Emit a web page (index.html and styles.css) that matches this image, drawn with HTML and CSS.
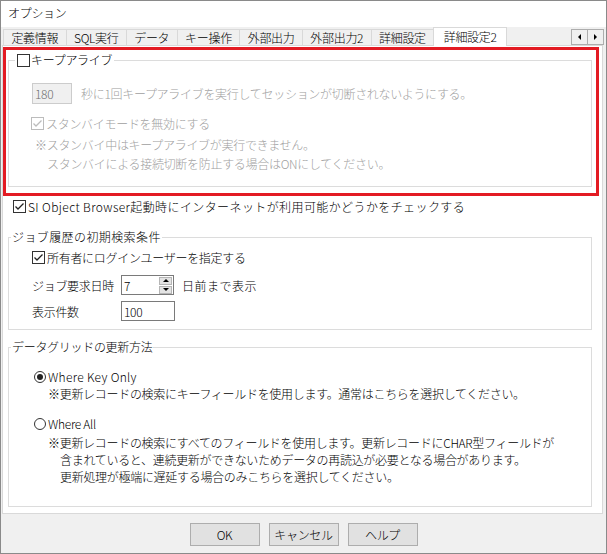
FILE: index.html
```html
<!DOCTYPE html>
<html lang="ja">
<head>
    <meta charset="UTF-8">
    <title>オプション</title>
    <link rel="stylesheet" href="styles.css">
</head>
<body>
    <div class="window">
        <div class="titlebar">オプション</div>

        <div class="tabstrip">
            <div class="tabs">
                <div class="tab">定義情報</div>
                <div class="tab">SQL実行</div>
                <div class="tab">データ</div>
                <div class="tab">キー操作</div>
                <div class="tab">外部出力</div>
                <div class="tab">外部出力2</div>
                <div class="tab">詳細設定</div>
                <div class="tab active">詳細設定2</div>
            </div>
            <div class="tab-scroll">
                <span class="scroll-btn"><span class="arrow-left"></span></span>
                <span class="scroll-btn"><span class="arrow-right"></span></span>
            </div>
        </div>

        <div class="page">
            <!-- キープアライブ (赤枠) -->
            <div class="highlight">
                <fieldset class="group keepalive">
                    <legend><span class="check"></span>キープアライブ</legend>
                    <div class="ka-interval disabled">
                        <span class="textbox textbox-disabled">180</span>
                        <span class="ka-text">秒に1回キープアライブを実行してセッションが切断されないようにする。</span>
                    </div>
                    <div class="check-row ka-standby disabled">
                        <span class="check checked check-disabled">
                            <svg width="11" height="11" viewBox="0 0 11 11"><path d="M1.5 5.5 L4 8 L9.5 2.5" fill="none" stroke="#bcbcbc" stroke-width="1.3"/></svg>
                        </span>スタンバイモードを無効にする
                    </div>
                    <div class="note ka-note1 disabled">※スタンバイ中はキープアライブが実行できません。</div>
                    <div class="note ka-note2 disabled">スタンバイによる接続切断を防止する場合はONにしてください。</div>
                </fieldset>
            </div>

            <div class="check-row top-check">
                <span class="check checked">
                    <svg width="11" height="11" viewBox="0 0 11 11"><path d="M1.5 5.5 L4 8 L9.5 2.5" fill="none" stroke="#222" stroke-width="1.3"/></svg>
                </span><span class="wide-text">SI Object Browser起動時にインターネットが利用可能かどうかをチェックする</span>
            </div>

            <!-- ジョブ履歴 -->
            <fieldset class="group job">
                <legend>ジョブ履歴の初期検索条件</legend>
                <div class="check-row job-owner">
                    <span class="check checked">
                        <svg width="11" height="11" viewBox="0 0 11 11"><path d="M1.5 5.5 L4 8 L9.5 2.5" fill="none" stroke="#222" stroke-width="1.3"/></svg>
                    </span>所有者にログインユーザーを指定する
                </div>
                <div class="field-row job-date">
                    <span class="field-label">ジョブ要求日時</span>
                    <span class="textbox spinbox">
                        <span class="spin-value">7</span>
                        <span class="spin">
                            <span class="spin-btn"><span class="arrow-up"></span></span>
                            <span class="spin-btn"><span class="arrow-down"></span></span>
                        </span>
                    </span>
                    <span class="field-after">日前まで表示</span>
                </div>
                <div class="field-row job-count">
                    <span class="field-label">表示件数</span>
                    <span class="textbox count-box">100</span>
                </div>
            </fieldset>

            <!-- データグリッド -->
            <fieldset class="group grid">
                <legend>データグリッドの更新方法</legend>
                <div class="radio-row first-radio"><span class="radio selected"></span>Where Key Only</div>
                <div class="desc">※更新レコードの検索にキーフィールドを使用します。通常はこちらを選択してください。</div>
                <div class="radio-row second-radio"><span class="radio"></span>Where All</div>
                <div class="desc desc-first">※更新レコードの検索にすべてのフィールドを使用します。更新レコードにCHAR型フィールドが</div>
                <div class="desc desc-indent">含まれていると、連続更新ができないためデータの再読込が必要となる場合があります。</div>
                <div class="desc desc-indent">更新処理が極端に遅延する場合のみこちらを選択してください。</div>
            </fieldset>
        </div>

        <div class="footer">
            <button>OK</button>
            <button>キャンセル</button>
            <button>ヘルプ</button>
        </div>
    </div>
</body>
</html>
```

FILE: styles.css
```css
body {
    margin: 0;
    padding: 0;
    font-family: "Noto Sans CJK JP", sans-serif;
    font-size: 12px;
    font-weight: 300;
    letter-spacing: -0.3px;
    color: #000;
    background-color: #fff;
}

.window {
    width: 607px;
    height: 554px;
    box-sizing: border-box;
    border: 1px solid #8a8a8a;
    background-color: #f0f0f0;
    display: flex;
    flex-direction: column;
}

.titlebar {
    height: 26px;
    line-height: 24px;
    padding-left: 7px;
    background-color: #fff;
}

/* タブ */
.tabstrip {
    height: 18px;
    display: flex;
    align-items: flex-end;
    padding: 0 2px 0 2px;
}

.tabs {
    display: flex;
    align-items: flex-end;
}

.tab {
    height: 16px;
    line-height: 15px;
    padding: 0 7.4px;
    border: 1px solid #d9d9d9;
    border-bottom: none;
    margin-right: -1px;
    background-color: #f0f0f0;
    box-sizing: border-box;
}

.tab.active {
    height: 19px;
    line-height: 18px;
    padding: 0 9.5px;
    background-color: #fff;
    margin-bottom: -1px;
    position: relative;
    z-index: 1;
}

.tab-scroll {
    margin-left: auto;
    display: flex;
}

.scroll-btn {
    width: 17px;
    height: 16px;
    box-sizing: border-box;
    border: 1px solid #adadad;
    background-color: #f0f0f0;
    margin-left: -1px;
    display: flex;
    align-items: center;
    justify-content: center;
}

.arrow-left {
    width: 0;
    height: 0;
    border-top: 3px solid transparent;
    border-bottom: 3px solid transparent;
    border-right: 3px solid #000;
}

.arrow-right {
    width: 0;
    height: 0;
    border-top: 3px solid transparent;
    border-bottom: 3px solid transparent;
    border-left: 3px solid #000;
}

/* タブページ */
.page {
    height: 469px;
    box-sizing: border-box;
    margin: 0 3px 0 1px;
    border: 1px solid #d9d9d9;
    background-color: #fff;
}

.highlight {
    width: 596px;
    box-sizing: border-box;
    margin-top: 1px;
    border: 3px solid #e31b23;
    padding: 3px 0 6px 2px;
}

.group {
    width: 584px;
    box-sizing: border-box;
    margin: 0;
    padding: 0;
    border: 1px solid #dcdcdc;
    min-width: 0;
}

.group legend {
    height: 14px;
    line-height: 14px;
    padding: 0 1px;
    margin-left: 2px;
}

.keepalive {
    padding-bottom: 13px;
}

.keepalive legend {
    margin-left: 6px;
    padding: 0 2px;
    display: flex;
    align-items: center;
}

.keepalive legend .check {
    margin-right: 1px;
}

.disabled {
    color: #a0a0a0;
}

.ka-interval {
    display: flex;
    align-items: center;
    height: 21px;
    margin-top: 16px;
    padding-left: 23px;
}

.ka-text {
    margin-left: 9px;
}

.textbox {
    display: flex;
    align-items: center;
    box-sizing: border-box;
    border: 1px solid #7a7a7a;
    background-color: #fff;
    padding-left: 2px;
    height: 20px;
    color: #000;
}

.textbox-disabled {
    width: 40px;
    height: 21px;
    border-color: #cccccc;
    background-color: #f0f0f0;
    color: #6d6d6d;
}

/* チェックボックス */
.check-row {
    display: flex;
    align-items: center;
    height: 19px;
    line-height: 19px;
}

.check {
    width: 13px;
    height: 13px;
    box-sizing: border-box;
    border: 1px solid #333;
    background-color: #fff;
    margin-right: 2px;
    display: flex;
    align-items: center;
    justify-content: center;
    flex-shrink: 0;
}

.check-disabled {
    border-color: #bcbcbc;
}

.ka-standby {
    margin-top: 10px;
    padding-left: 22px;
}

.note {
    height: 19px;
    line-height: 19px;
}

.ka-note1 {
    margin-top: 2px;
    padding-left: 26px;
}

.ka-note2 {
    padding-left: 38px;
}

.top-check {
    margin-top: 1px;
    padding-left: 10px;
}

.wide-text {
    letter-spacing: 0.4px;
}

/* ジョブ履歴 */
.job {
    margin: 14px 0 0 5px;
    padding-bottom: 8px;
}

.job legend {
    letter-spacing: 0.4px;
}

.job-owner {
    margin-top: 4px;
    padding-left: 23px;
}

.field-row {
    display: flex;
    align-items: center;
    height: 20px;
    padding-left: 23px;
}

.job-date {
    margin-top: 8px;
}

.job-count {
    margin-top: 6px;
}

.field-label {
    width: 89px;
}

.spinbox {
    width: 53px;
    padding-right: 1px;
}

.spin-value {
    flex-grow: 1;
}

.spin {
    display: flex;
    flex-direction: column;
    gap: 1px;
}

.spin-btn {
    width: 13px;
    height: 8px;
    box-sizing: border-box;
    border: 1px solid #b5b5b5;
    background-color: #e3e3e3;
    display: flex;
    align-items: center;
    justify-content: center;
}

.arrow-up {
    width: 0;
    height: 0;
    border-left: 3px solid transparent;
    border-right: 3px solid transparent;
    border-bottom: 3px solid #000;
}

.arrow-down {
    width: 0;
    height: 0;
    border-left: 3px solid transparent;
    border-right: 3px solid transparent;
    border-top: 3px solid #000;
}

.field-after {
    margin-left: 8px;
    letter-spacing: 0.5px;
}

.count-box {
    width: 54px;
}

/* データグリッド */
.grid {
    margin: 10px 0 0 5px;
    padding-bottom: 21px;
}

.radio-row {
    display: flex;
    align-items: center;
    height: 17px;
    line-height: 17px;
    padding-left: 25px;
}

.first-radio {
    margin-top: 14px;
    letter-spacing: 0.3px;
}

.second-radio {
    margin-top: 13px;
}

.radio {
    width: 12px;
    height: 12px;
    box-sizing: border-box;
    border: 1px solid #333;
    border-radius: 50%;
    background-color: #fff;
    margin-right: 2px;
    display: flex;
    align-items: center;
    justify-content: center;
}

.radio.selected::after {
    content: "";
    width: 6px;
    height: 6px;
    border-radius: 50%;
    background-color: #222;
}

.desc {
    height: 17px;
    line-height: 17px;
    padding-left: 39px;
}

.desc-first {
    margin-top: 2px;
}

.desc-indent {
    padding-left: 51px;
}

/* ボタン */
.footer {
    display: flex;
    justify-content: center;
    gap: 9px;
    padding-top: 9px;
}

button {
    width: 70px;
    height: 23px;
    font-family: "Noto Sans CJK JP", sans-serif;
    font-size: 12px;
    font-weight: 300;
    letter-spacing: -0.3px;
    border: 1px solid #adadad;
    background-color: #e1e1e1;
    color: #000;
    padding: 0;
}
```
